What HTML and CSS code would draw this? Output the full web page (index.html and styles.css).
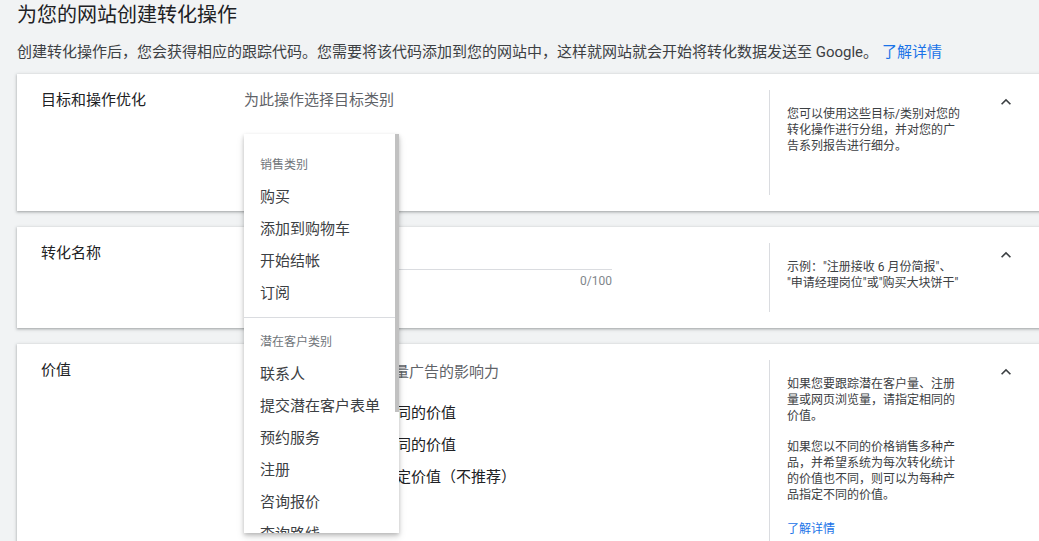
FILE: index.html
```html
<!DOCTYPE html>
<html lang="zh-CN">

<head>
    <meta charset="UTF-8">
    <meta name="viewport" content="width=device-width, initial-scale=1.0">
    <title>创建转化操作</title>
    <link rel="stylesheet" href="styles.css">
</head>

<body>
    <div class="page">
        <h1 class="title">为您的网站创建转化操作</h1>
        <p class="intro">创建转化操作后，您会获得相应的跟踪代码。您需要将该代码添加到您的网站中，这样就网站就会开始将转化数据发送至 Google。<a href="#" class="link">了解详情</a></p>

        <section class="card card-goal">
            <div class="card-label">目标和操作优化</div>
            <div class="card-body">
                <div class="hint">为此操作选择目标类别</div>
                <div class="menu">
                    <div class="menu-scroll"></div>
                    <div class="menu-group">
                        <div class="menu-header">销售类别</div>
                        <div class="menu-item">购买</div>
                        <div class="menu-item">添加到购物车</div>
                        <div class="menu-item">开始结帐</div>
                        <div class="menu-item">订阅</div>
                    </div>
                    <div class="menu-group">
                        <div class="menu-header">潜在客户类别</div>
                        <div class="menu-item">联系人</div>
                        <div class="menu-item">提交潜在客户表单</div>
                        <div class="menu-item">预约服务</div>
                        <div class="menu-item">注册</div>
                        <div class="menu-item">咨询报价</div>
                        <div class="menu-item">查询路线</div>
                        <div class="menu-item">其他</div>
                    </div>
                </div>
            </div>
            <div class="card-help">
                <p>您可以使用这些目标/类别对您的转化操作进行分组，并对您的广告系列报告进行细分。</p>
            </div>
            <div class="card-toggle">
                <svg width="20" height="20" viewBox="0 0 24 24"><path d="M7.41 15.41L12 10.83l4.59 4.58L18 14l-6-6-6 6z"/></svg>
            </div>
        </section>

        <section class="card card-name">
            <div class="card-label">转化名称</div>
            <div class="card-body">
                <div class="field"></div>
                <div class="counter">0/100</div>
            </div>
            <div class="card-help">
                <p>示例："注册接收 6 月份简报"、<br>"申请经理岗位"或"购买大块饼干"</p>
            </div>
            <div class="card-toggle">
                <svg width="20" height="20" viewBox="0 0 24 24"><path d="M7.41 15.41L12 10.83l4.59 4.58L18 14l-6-6-6 6z"/></svg>
            </div>
        </section>

        <section class="card card-value">
            <div class="card-label">价值</div>
            <div class="card-body">
                <div class="hint">为转化指定价值以便衡量广告的影响力</div>
                <div class="options">
                    <div class="option"><span class="radio"></span>为每次转化使用相同的价值</div>
                    <div class="option"><span class="radio"></span>为每次转化使用不同的价值</div>
                    <div class="option"><span class="radio"></span>不为此转化操作指定价值（不推荐）</div>
                </div>
            </div>
            <div class="card-help">
                <p>如果您要跟踪潜在客户量、注册量或网页浏览量，请指定相同的价值。</p>
                <p>如果您以不同的价格销售多种产品，并希望系统为每次转化统计的价值也不同，则可以为每种产品指定不同的价值。</p>
                <p class="more"><a href="#" class="link">了解详情</a></p>
            </div>
            <div class="card-toggle">
                <svg width="20" height="20" viewBox="0 0 24 24"><path d="M7.41 15.41L12 10.83l4.59 4.58L18 14l-6-6-6 6z"/></svg>
            </div>
        </section>
    </div>
</body>

</html>
```

FILE: styles.css
```css
* {
    margin: 0;
    padding: 0;
    box-sizing: border-box;
}

html,
body {
    overflow: hidden;
}

body {
    background: #f1f3f4;
    color: #202124;
    font-family: Roboto, "Noto Sans CJK SC", sans-serif;
}

.page {
    padding-left: 17px;
}

.title {
    font-size: 20px;
    font-weight: 400;
    line-height: 28px;
    padding-top: 1px;
}

.intro {
    margin-top: 13px;
    font-size: 15px;
    line-height: 20px;
    color: #3c4043;
    white-space: nowrap;
}

.link {
    color: #1a73e8;
    text-decoration: none;
}

.intro .link {
    margin-left: 4px;
}

.card {
    width: 1030px;
    margin-top: 12px;
    margin-bottom: 16px;
    background: #fff;
    display: grid;
    grid-template-columns: 203px 526px 195px 1fr;
    padding: 16px 0 16px 24px;
    box-shadow: 0 1px 2px rgba(60, 64, 67, 0.3), 0 1px 3px 1px rgba(60, 64, 67, 0.15);
}

.card + .card {
    margin-top: 0;
}

.card-goal {
    min-height: 137px;
}

.card-name {
    min-height: 101px;
}

.card-value {
    min-height: 240px;
}

.card-label {
    font-size: 15px;
    line-height: 20px;
}

.card-body {
    position: relative;
    border-right: 1px solid #dadce0;
}

.hint {
    font-size: 15px;
    line-height: 20px;
    color: #5f6368;
}

.card-value .hint {
    padding-top: 2px;
}

.card-help {
    padding: 16px 0 0 17px;
    font-size: 12px;
    line-height: 16px;
    color: #3c4043;
}

.card-help p {
    width: 176px;
    margin-bottom: 15px;
}

.card-help .more {
    margin-top: 18px;
}

.card-toggle {
    padding: 2px 0 0 31px;
}

.card-toggle svg {
    display: block;
    fill: #3c4043;
}

/* conversion name field */
.field {
    width: 368px;
    height: 27px;
    border-bottom: 1px solid #dadce0;
}

.counter {
    width: 368px;
    margin-top: 3px;
    text-align: right;
    font-size: 12px;
    line-height: 16px;
    color: #80868b;
}

/* value options */
.options {
    margin-top: 13px;
}

.option {
    display: flex;
    align-items: center;
    height: 32px;
    font-size: 15px;
    color: #202124;
}

.radio {
    width: 20px;
    height: 20px;
    border: 2px solid #5f6368;
    border-radius: 50%;
    margin-right: 12px;
}

/* category dropdown */
.menu {
    position: absolute;
    top: 44px;
    left: 0;
    z-index: 10;
    width: 155px;
    height: 399px;
    overflow: hidden;
    background: #fff;
    padding-top: 7px;
    box-shadow: 0 2px 4px rgba(0, 0, 0, 0.2), 0 4px 8px rgba(0, 0, 0, 0.12);
}

.menu-scroll {
    position: absolute;
    top: 0;
    right: 0;
    width: 4px;
    height: 278px;
    background: #c1c1c1;
}

.menu-group {
    margin-right: 4px;
    padding: 8px 0;
}

.menu-group + .menu-group {
    border-top: 1px solid #dadce0;
}

.menu-header {
    padding-left: 16px;
    font-size: 12px;
    line-height: 32px;
    color: #70757a;
}

.menu-item {
    padding-left: 16px;
    font-size: 15px;
    line-height: 32px;
    color: #3c4043;
    white-space: nowrap;
}
```
